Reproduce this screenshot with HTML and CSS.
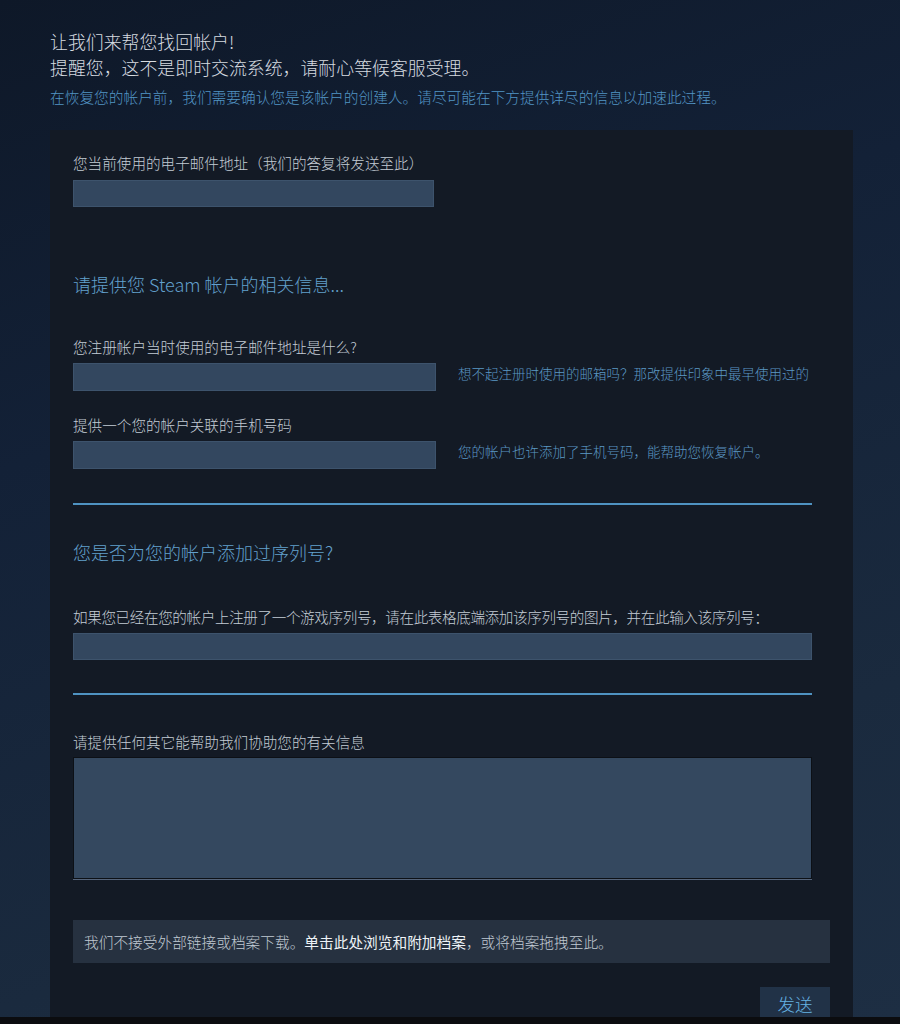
FILE: index.html
```html
<!DOCTYPE html>
<html lang="zh-CN">
<head>
<meta charset="utf-8">
<title>找回帐户</title>
<link rel="stylesheet" href="styles.css">
</head>
<body>
<div class="page">
  <div class="intro">
    <div class="intro-title">让我们来帮您找回帐户!</div>
    <div class="intro-title">提醒您，这不是即时交流系统，请耐心等候客服受理。</div>
    <div class="intro-note">在恢复您的帐户前，我们需要确认您是该帐户的创建人。请尽可能在下方提供详尽的信息以加速此过程。</div>
  </div>

  <div class="panel">
    <div class="label label-first">您当前使用的电子邮件地址（我们的答复将发送至此）</div>
    <div class="input input-short"></div>

    <div class="section-title st-first">请提供您 Steam 帐户的相关信息...</div>

    <div class="label label-gap1">您注册帐户当时使用的电子邮件地址是什么?</div>
    <div class="row">
      <div class="input input-mid"></div>
      <div class="hint">想不起注册时使用的邮箱吗？那改提供印象中最早使用过的</div>
    </div>

    <div class="label label-gap2">提供一个您的帐户关联的手机号码</div>
    <div class="row">
      <div class="input input-mid"></div>
      <div class="hint">您的帐户也许添加了手机号码，能帮助您恢复帐户。</div>
    </div>

    <div class="divider div-first"></div>

    <div class="section-title st-second">您是否为您的帐户添加过序列号?</div>

    <div class="label label-gap3">如果您已经在您的帐户上注册了一个游戏序列号，请在此表格底端添加该序列号的图片，并在此输入该序列号：</div>
    <div class="input input-full"></div>

    <div class="divider div-second"></div>

    <div class="label label-gap4">请提供任何其它能帮助我们协助您的有关信息</div>
    <div class="textarea"></div>

    <div class="notice">我们不接受外部链接或档案下载。<span class="notice-link">单击此处浏览和附加档案</span>，或将档案拖拽至此。</div>

    <div class="actions">
      <div class="btn">发送</div>
    </div>
  </div>
</div>
<div class="footer"></div>
</body>
</html>
```

FILE: styles.css
```css
html, body {
  margin: 0;
  padding: 0;
  background: #0b0c0f;
}

body {
  font-family: "Noto Sans CJK SC", "Noto Sans", sans-serif;
  font-weight: 300;
}

.page {
  height: 1017px;
  overflow: hidden;
  box-sizing: border-box;
  padding: 28px 0 0 50px;
  background: linear-gradient(160deg, #0e1828 0%, #132137 35%, #1a2a3e 75%, #1d2e43 100%);
}

.intro-title {
  font-size: 17.9px;
  line-height: 26px;
  color: #d6dbe0;
}

.intro-note {
  font-size: 14.7px;
  line-height: 20px;
  margin-top: 7px;
  color: #5294c4;
}

.panel {
  width: 803px;
  box-sizing: border-box;
  margin-top: 23px;
  padding: 23px 23px 0 23px;
  background: #131a25;
  min-height: 900px;
}

.label {
  font-size: 14.6px;
  line-height: 20px;
  color: #c3ccd5;
  white-space: nowrap;
}

.label-first { margin-bottom: 7px; }
.label-gap1 { margin-top: 41px; margin-bottom: 6px; }
.label-gap2 { margin-top: 24px; margin-bottom: 6px; }
.label-gap3 { margin-top: 43px; margin-bottom: 6px; letter-spacing: -0.4px; }
.label-gap4 { margin-top: 37px; margin-bottom: 5px; }

.input {
  box-sizing: border-box;
  height: 27px;
  background: #33475f;
  border: 1px solid #3d536c;
}

.input-short { width: 361px; }
.input-mid { width: 363px; height: 28px; flex: none; }
.input-full { width: 739px; }

.row {
  display: flex;
  align-items: flex-start;
  gap: 22px;
}

.hint {
  font-size: 13.5px;
  line-height: 20px;
  color: #5b98c4;
  white-space: nowrap;
}

.section-title {
  font-size: 18px;
  line-height: 24px;
  color: #62a0cd;
}

.st-first { margin-top: 65px; }
.st-second { margin-top: 35px; }

.divider {
  width: 739px;
  height: 2px;
  background: #4f93c2;
}

.div-first { margin-top: 34px; }
.div-second { margin-top: 33px; }

.textarea {
  box-sizing: border-box;
  width: 739px;
  height: 122px;
  background: #34485f;
  border: 1px solid #0c1016;
  box-shadow: 0 1px 0 #55647a;
}

.notice {
  margin-top: 41px;
  width: 757px;
  box-sizing: border-box;
  height: 43px;
  padding: 0 11px;
  display: flex;
  align-items: center;
  background: #263140;
  font-size: 14.7px;
  color: #c0c9d2;
  white-space: nowrap;
}

.notice-link {
  color: #eef3f7;
  font-weight: 400;
}

.actions {
  width: 757px;
  display: flex;
  justify-content: flex-end;
  margin-top: 24px;
}

.btn {
  width: 70px;
  height: 36px;
  box-sizing: border-box;
  padding-top: 4px;
  text-align: center;
  background: #213247;
  color: #66b4e4;
  font-size: 17.5px;
  line-height: 26px;
}

.footer {
  height: 7px;
  background: #0b0c0f;
}
```
